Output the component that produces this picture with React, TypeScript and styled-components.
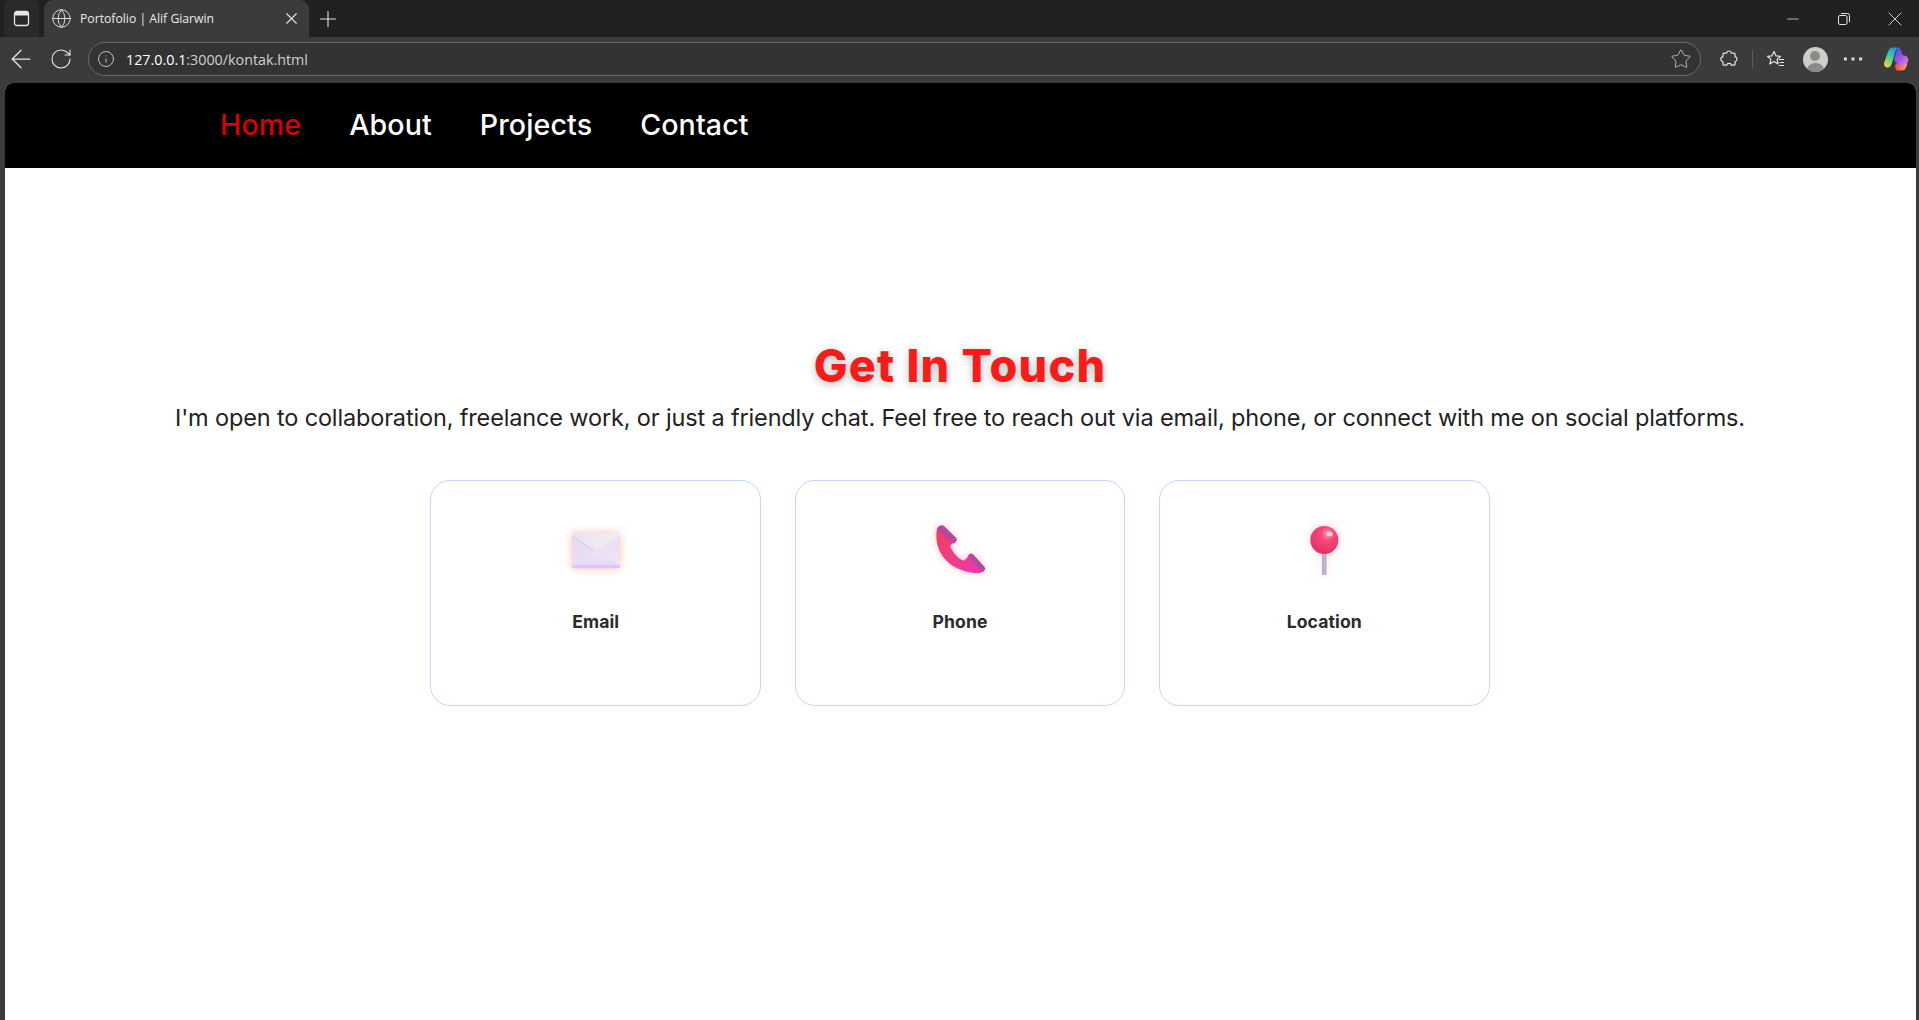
import React from "react";
import styled, { createGlobalStyle } from "styled-components";
import {
  ArrowLeft,
  Ellipsis,
  Globe,
  Info,
  Minus,
  Plus,
  RotateCw,
  Star,
  X,
} from "lucide-react";

const GlobalStyle = createGlobalStyle`
  html, body {
    margin: 0;
    padding: 0;
    height: 100%;
    overflow: hidden;
    background: #3b3b3b;
  }

  * {
    box-sizing: border-box;
  }
`;

const Shell = styled.div`
  width: 100%;
  height: 1020px;
  display: flex;
  flex-direction: column;
  background: #3b3b3b;
  font-family: Inter, "Liberation Sans", sans-serif;
`;

const TabStrip = styled.div`
  height: 37px;
  flex: none;
  display: flex;
  align-items: stretch;
  background: #202020;
  color: #e6e6e6;
  padding-left: 4px;
`;

const TabListButton = styled.div`
  width: 35px;
  height: 37px;
  margin-right: 5px;
  display: flex;
  align-items: center;
  justify-content: center;
  background: #2a2a2a;
  border-radius: 6px 6px 4px 4px;
`;

const Tab = styled.div`
  width: 265px;
  display: flex;
  align-items: center;
  padding: 0 8px 0 7px;
  background: #3b3b3b;
  border-radius: 9px 9px 0 0;
`;

const TabTitle = styled.span`
  flex: 1;
  margin-left: 8px;
  font-family: "Open Sans", sans-serif;
  font-size: 12.2px;
  color: #eaeaea;
`;

const NewTab = styled.div`
  width: 38px;
  display: flex;
  align-items: center;
  justify-content: center;
`;

const WindowControls = styled.div`
  margin-left: auto;
  margin-right: -1px;
  display: flex;
  align-items: center;
  height: 37px;
`;

const WindowButton = styled.div`
  width: 51px;
  display: flex;
  align-items: center;
  justify-content: center;
`;

const Toolbar = styled.div`
  height: 46px;
  flex: none;
  display: flex;
  align-items: center;
  padding: 0 3px 2px 1px;
  color: #e6e6e6;
`;

const NavIcon = styled.div`
  width: 40px;
  height: 32px;
  flex: none;
  display: flex;
  align-items: center;
  justify-content: center;
`;

const AddressBar = styled.div`
  flex: 1;
  height: 34px;
  margin: 0 8px 0 7px;
  padding: 0 8px 0 8px;
  display: flex;
  align-items: center;
  background: #333333;
  border: 1px solid #6b6b6b;
  border-radius: 17px;
`;

const Url = styled.span`
  flex: 1;
  margin-left: 11px;
  font-family: "Open Sans", sans-serif;
  font-size: 14.3px;
  color: #f2f2f2;
`;

const UrlHost = styled.span`
  color: #ffffff;
`;

const UrlPath = styled.span`
  color: #cfcfcf;
`;

const ToolbarDivider = styled.div`
  width: 1px;
  height: 18px;
  flex: none;
  margin: 0 2px 0 3px;
  background: #5c5c5c;
`;

const Avatar = styled.div`
  position: relative;
  width: 25px;
  height: 25px;
  flex: none;
  margin: 0 5.5px 0 7.5px;
  border-radius: 50%;
  background: #cfcdca;
  overflow: hidden;

  &::before {
    content: "";
    position: absolute;
    left: 7.5px;
    top: 4px;
    width: 10px;
    height: 10px;
    border-radius: 50%;
    background: #8c8a88;
  }

  &::after {
    content: "";
    position: absolute;
    left: 4px;
    top: 16px;
    width: 17px;
    height: 14px;
    border-radius: 50%;
    background: #8c8a88;
  }
`;

const LogoSlot = styled(NavIcon)`
  margin-left: 3px;
`;

const Viewport = styled.div`
  flex: 1;
  display: flex;
  flex-direction: column;
  margin: 0 3px 0 5px;
  background: #ffffff;
  border-radius: 8px 8px 0 0;
  overflow: hidden;
`;

const Navbar = styled.nav`
  height: 85px;
  flex: none;
  display: flex;
  align-items: center;
  gap: 48px;
  padding: 0 0 2px 215px;
  background: #000000;
`;

const NavLink = styled.a<{ $active?: boolean }>`
  font-size: 28.6px;
  font-weight: 500;
  letter-spacing: 0.1px;
  color: ${(p) => (p.$active ? "#d90000" : "#ffffff")};
`;

const Section = styled.main`
  display: flex;
  flex-direction: column;
  align-items: center;
  padding: 170px 1px 0 0;
`;

const Heading = styled.h1`
  margin: 0;
  font-size: 45px;
  line-height: 56px;
  font-weight: 800;
  letter-spacing: 1.2px;
  color: #f51c1c;
  text-shadow: 0 2px 8px rgba(0, 0, 0, 0.28);
`;

const Subtitle = styled.p`
  margin: 6px 0 0;
  font-size: 23.5px;
  line-height: 36px;
  letter-spacing: -0.15px;
  color: #222222;
`;

const CardRow = styled.div`
  display: flex;
  gap: 33.6px;
  margin-top: 44px;
`;

const Card = styled.div`
  width: 330.7px;
  height: 226px;
  display: flex;
  flex-direction: column;
  align-items: center;
  padding-top: 38px;
  background: #ffffff;
  border: 1px solid #c5d5ff;
  border-radius: 20px;
`;

const CardIcon = styled.svg`
  width: 60px;
  height: 60px;
`;

const CardLabel = styled.span`
  margin-top: 30px;
  font-size: 17.6px;
  line-height: 26px;
  font-weight: 700;
  letter-spacing: 0.1px;
  color: #2b2b2b;
`;

function TabListIcon() {
  return (
    <svg width="17" height="17" viewBox="0 0 17 17" fill="none">
      <rect x="1.500" y="1.500" width="14" height="14" rx="2.500" stroke="#e6e6e6" strokeWidth="1.300" />
      <path d="M1.500 4a2.500 2.500 0 0 1 2.500-2.500h9a2.500 2.500 0 0 1 2.500 2.500v1.500h-14z" fill="#e6e6e6" />
    </svg>
  );
}

function PuzzleIcon() {
  return (
    <svg width="20" height="20" viewBox="0 0 20 20" fill="none" stroke="#e6e6e6" strokeWidth="1.2">
      <path d="M8 3.2c0-1.6 4-1.6 4 0 0 .6.4 1 1 1h2c.6 0 1 .4 1 1v2c0 .6.4 1 1 1 1.2.2 1.2 3.6 0 3.8-.6 0-1 .4-1 1v2.200c0 .6-.4 1-1 1h-2.200c-.6 0-1-.4-1-1-.2-1.200-3.400-1.200-3.600 0 0 .6-.4 1-1 1H5c-.6 0-1-.4-1-1v-2c0-.6-.4-1-1-1-1.600-.2-1.600-3.800 0-4 .6 0 1-.4 1-1v-2c0-.6.4-1 1-1h2c.6 0 1-.4 1-1z" />
    </svg>
  );
}

function FavoritesIcon() {
  return (
    <svg width="20" height="20" viewBox="0 0 20 20" fill="none" stroke="#e6e6e6" strokeWidth="1.2">
      <path d="M9 2.500l2 4.300 4.500.5-3.400 3.100 1 4.600-4.100-2.400-4.100 2.400 1-4.600-3.400-3.100 4.500-.5z" strokeLinejoin="round" />
      <path d="M14 10.500h5M14.500 13.500h4.500M14 16.500h5" />
    </svg>
  );
}

function RestoreIcon() {
  return (
    <svg width="12" height="12" viewBox="0 0 12 12" fill="none" stroke="#e6e6e6" strokeWidth="1">
      <rect x="0.500" y="2.500" width="8.500" height="9" rx="1.500" />
      <path d="M3 .500h6.500a2 2 0 0 1 2 2V9" />
    </svg>
  );
}

function CopilotLogo() {
  return (
    <svg width="26" height="26" viewBox="0 0 26 26">
      <defs>
        <linearGradient id="copilotLeft" x1="0.7" y1="0" x2="0.2" y2="1">
          <stop offset="0" stopColor="#2a8fe8" />
          <stop offset="0.45" stopColor="#35d0a0" />
          <stop offset="1" stopColor="#f5d040" />
        </linearGradient>
        <linearGradient id="copilotRight" x1="0" y1="0" x2="1" y2="1">
          <stop offset="0" stopColor="#2e50d8" />
          <stop offset="0.5" stopColor="#a350e8" />
          <stop offset="1" stopColor="#e48ade" />
        </linearGradient>
        <linearGradient id="copilotBottom" x1="0" y1="0" x2="1" y2="0">
          <stop offset="0" stopColor="#ee4a38" />
          <stop offset="1" stopColor="#f8a468" />
        </linearGradient>
      </defs>
      <path d="M12 19l2.500-2 10 .5-1.500 4c-.8 2-2 3-4.200 3H15c-2 0-3-2-3-5.500z" fill="url(#copilotBottom)" />
      <path d="M10 1.500h6c-2.500 .5-3.500 3-4.200 5.500L9 17c-.6 2.500-2 4.500-4.500 4.500C2 21.500.5 19 1.200 16.500L5 6c1-3 2.500-4.500 5-4.500z" fill="url(#copilotLeft)" />
      <path d="M14.500 1.500c2 0 3.300 1.300 3.800 3.500l1 4c2.700.3 5.700 1.500 6 4.500-.3 3.500-3.300 6-6.800 6-1.500 0-3-.5-4-1.500L11 14l2-8c.3-1.500.7-3.500 1.500-4.500z" fill="url(#copilotRight)" />
    </svg>
  );
}

function EnvelopeIcon() {
  return (
    <CardIcon viewBox="78 27 180 180" style={{ filter: "drop-shadow(0 0 4px rgba(255,140,110,0.55))" }}>
      <defs>
        <linearGradient id="envBody" x1="0" y1="0" x2="1" y2="1">
          <stop offset="0" stopColor="#e8d8ec" />
          <stop offset="1" stopColor="#eee4f8" />
        </linearGradient>
        <linearGradient id="envFlap" x1="0" y1="0" x2="1" y2="0.300">
          <stop offset="0" stopColor="#ebe3ee" />
          <stop offset="1" stopColor="#f0ecf1" />
        </linearGradient>
        <linearGradient id="envFront" x1="0" y1="0" x2="0" y2="1">
          <stop offset="0" stopColor="#efe4f6" />
          <stop offset="1" stopColor="#e6d7f4" />
        </linearGradient>
      </defs>
      <rect x="96" y="68" width="144" height="107" rx="7" fill="url(#envBody)" />
      <path d="M96 165l70-43 74 43v3a7 7 0 0 1-7 7H103a7 7 0 0 1-7-7z" fill="url(#envFront)" />
      <path d="M96 165h144v3a7 7 0 0 1-7 7H103a7 7 0 0 1-7-7z" fill="#dcc6f5" />
      <path d="M100 68h136a4 4 0 0 1 4 6l-72 47-72-47a4 4 0 0 1 4-6z" fill="url(#envFlap)" />
      <path d="M98 80l60 40" stroke="#d8c6ea" strokeWidth="3" fill="none" />
      <path d="M238 76l-62 43" stroke="#f6f1fb" strokeWidth="2" fill="none" />
      <path d="M176 124l60 40" stroke="#f3ecfa" strokeWidth="2" fill="none" />
    </CardIcon>
  );
}

function PhoneIcon() {
  return (
    <CardIcon viewBox="90 27 180 180" style={{ filter: "drop-shadow(0 0 4px rgba(255,90,110,0.35))" }}>
      <defs>
        <linearGradient id="phoneBody" x1="0" y1="0" x2="1" y2="1">
          <stop offset="0" stopColor="#f0405f" />
          <stop offset="1" stopColor="#ee38b0" />
        </linearGradient>
      </defs>
      <path
        d="M110 62c-4 30 4 60 24 84 20 24 50 38 94 44 14 1 22-8 26-14l-42-44-20 20c-14-2-32-22-42-44l20-20-40-40c-8 0-18 4-20 14z"
        fill="url(#phoneBody)"
      />
      <path d="M111 58c2-10 14-15 21-10l36 35c4 4 3 9-2 14l-5 4z" fill="#b3489e" />
      <path d="M203 138l5-5c4-3 8-3 11 0l35 38c3 6 0 12-5 14l-5 2z" fill="#b3489e" />
    </CardIcon>
  );
}

function PinIcon() {
  return (
    <CardIcon viewBox="42 27 180 180" style={{ filter: "drop-shadow(0 0 4px rgba(255,90,110,0.3))" }}>
      <defs>
        <radialGradient id="pinHead" cx="0.62" cy="0.28" r="0.8">
          <stop offset="0" stopColor="#f9a0bb" />
          <stop offset="0.3" stopColor="#f7487e" />
          <stop offset="1" stopColor="#dc2e5c" />
        </radialGradient>
        <linearGradient id="pinStem" x1="0" y1="0" x2="1" y2="0">
          <stop offset="0" stopColor="#8f8aa6" />
          <stop offset="0.5" stopColor="#c9c5d8" />
          <stop offset="1" stopColor="#9b96b0" />
        </linearGradient>
      </defs>
      <rect x="127" y="125" width="12" height="70" rx="3" fill="url(#pinStem)" />
      <circle cx="133" cy="90" r="42" fill="url(#pinHead)" />
      <ellipse cx="149" cy="72" rx="9" ry="7" fill="#fbd3de" />
    </CardIcon>
  );
}

export default function App() {
  return (
    <Shell>
      <GlobalStyle />
      <TabStrip>
        <TabListButton>
          <TabListIcon />
        </TabListButton>
        <Tab>
          <Globe size={21} strokeWidth={1.05} />
          <TabTitle>Portofolio | Alif Giarwin</TabTitle>
          <X size={19} strokeWidth={1.4} />
        </Tab>
        <NewTab>
          <Plus size={26} strokeWidth={1} />
        </NewTab>
        <WindowControls>
          <WindowButton>
            <Minus size={18} strokeWidth={1} />
          </WindowButton>
          <WindowButton>
            <RestoreIcon />
          </WindowButton>
          <WindowButton>
            <X size={24} strokeWidth={0.9} />
          </WindowButton>
        </WindowControls>
      </TabStrip>
      <Toolbar>
        <NavIcon>
          <ArrowLeft size={30} strokeWidth={1} />
        </NavIcon>
        <NavIcon>
          <RotateCw size={24} strokeWidth={1.1} />
        </NavIcon>
        <AddressBar>
          <Info size={18} strokeWidth={1.2} color="#cfcfcf" />
          <Url>
            <UrlHost>127.0.0.1</UrlHost>
            <UrlPath>:3000/kontak.html</UrlPath>
          </Url>
          <Star size={22} strokeWidth={1} color="#bdbdbd" />
        </AddressBar>
        <NavIcon>
          <PuzzleIcon />
        </NavIcon>
        <ToolbarDivider />
        <NavIcon>
          <FavoritesIcon />
        </NavIcon>
        <Avatar />
        <NavIcon>
          <Ellipsis size={26} strokeWidth={1.2} />
        </NavIcon>
        <LogoSlot>
          <CopilotLogo />
        </LogoSlot>
      </Toolbar>
      <Viewport>
        <Navbar>
          <NavLink $active>Home</NavLink>
          <NavLink>About</NavLink>
          <NavLink>Projects</NavLink>
          <NavLink>Contact</NavLink>
        </Navbar>
        <Section>
          <Heading>Get In Touch</Heading>
          <Subtitle>
            I'm open to collaboration, freelance work, or just a friendly chat. Feel free to reach out via email, phone, or connect with me on social platforms.
          </Subtitle>
          <CardRow>
            <Card>
              <EnvelopeIcon />
              <CardLabel>Email</CardLabel>
            </Card>
            <Card>
              <PhoneIcon />
              <CardLabel>Phone</CardLabel>
            </Card>
            <Card>
              <PinIcon />
              <CardLabel>Location</CardLabel>
            </Card>
          </CardRow>
        </Section>
      </Viewport>
    </Shell>
  );
}
